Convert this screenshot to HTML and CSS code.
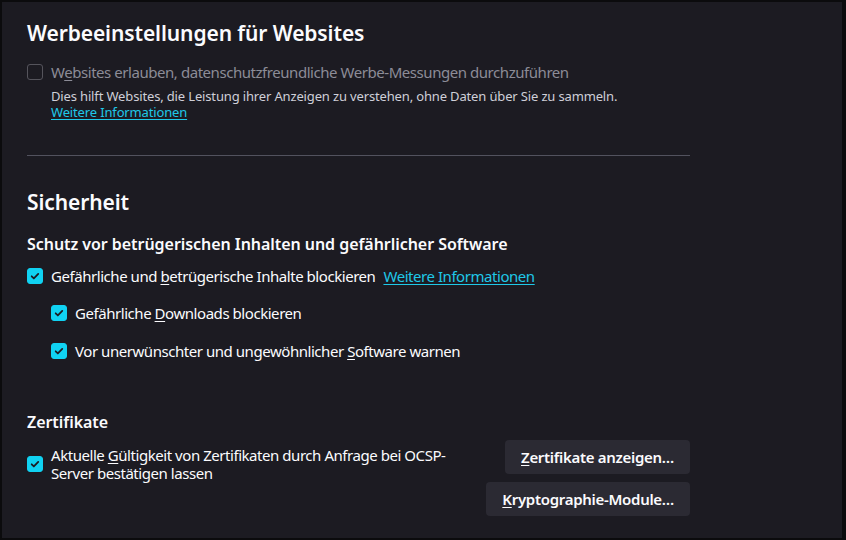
FILE: index.html
```html
<!DOCTYPE html>
<html lang="de">
<head>
<meta charset="utf-8">
<link rel="stylesheet" href="styles.css">
</head>
<body>
<div class="page">
  <main class="content">
    <h1 class="h1 first">Werbeeinstellungen für Websites</h1>
    <div class="row disabled">
      <span class="cb"></span>
      <span class="label">W<u>e</u>bsites erlauben, datenschutzfreundliche Werbe-Messungen durchzuführen</span>
    </div>
    <div class="desc">Dies hilft Websites, die Leistung ihrer Anzeigen zu verstehen, ohne Daten über Sie zu sammeln.</div>
    <div class="desc more"><a class="link" href="#">Weitere Informationen</a></div>

    <hr class="sep">

    <h1 class="h1 sec">Sicherheit</h1>
    <h2 class="h2 schutz">Schutz vor betrügerischen Inhalten und gefährlicher Software</h2>
    <div class="row r1">
      <span class="cb on"><svg viewBox="0 0 16 16"><path d="M4.2 8.3l2.5 2.5 5-5.2" /></svg></span>
      <span class="label">Gefährliche und <u>b</u>etrügerische Inhalte blockieren</span>
      <a class="link" href="#">Weitere Informationen</a>
    </div>
    <div class="row nested r2">
      <span class="cb on"><svg viewBox="0 0 16 16"><path d="M4.2 8.3l2.5 2.5 5-5.2" /></svg></span>
      <span class="label">Gefährliche <u>D</u>ownloads blockieren</span>
    </div>
    <div class="row nested r3">
      <span class="cb on"><svg viewBox="0 0 16 16"><path d="M4.2 8.3l2.5 2.5 5-5.2" /></svg></span>
      <span class="label">Vor unerwünschter und ungewöhnlicher <u>S</u>oftware warnen</span>
    </div>

    <h2 class="h2 zert">Zertifikate</h2>
    <div class="cert">
      <div class="row multi">
        <span class="cb on"><svg viewBox="0 0 16 16"><path d="M4.2 8.3l2.5 2.5 5-5.2" /></svg></span>
        <span class="label">Aktuelle <u>G</u>ültigkeit von Zertifikaten durch Anfrage bei OCSP-Server bestätigen lassen</span>
      </div>
      <div class="buttons">
        <button class="btn"><u>Z</u>ertifikate anzeigen…</button>
        <button class="btn"><u>K</u>ryptographie-Module…</button>
      </div>
    </div>
  </main>
</div>
</body>
</html>
```
FILE: styles.css
```css
* { box-sizing: border-box; }
html, body { margin: 0; padding: 0; background: #0b0b0d; }
.page {
  width: 846px;
  height: 540px;
  border-style: solid;
  border-color: #0b0b0d;
  border-width: 2px 4px 2px 2px;
  background: #1c1b22;
  color: #fbfbfe;
  font-family: "Noto Sans", "Open Sans", sans-serif;
  font-size: 15px;
  letter-spacing: -0.45px;
  overflow: hidden;
}
.content {
  width: 688px;
  padding-left: 25px;
}
.h1 {
  margin: 0;
  font-size: 21px;
  font-weight: 600;
  line-height: 28px;
  letter-spacing: -0.1px;
}
.h1.first { margin-top: 17px; }
.h2 {
  margin: 0;
  font-size: 16px;
  font-weight: 600;
  line-height: 22px;
  letter-spacing: -0.05px;
}
.row {
  display: flex;
  align-items: center;
  gap: 8px;
  line-height: 22px;
}
.row.disabled { margin-top: 14px; color: #8c8c97; }
.cb {
  flex: none;
  width: 16px;
  height: 16px;
  border-radius: 3px;
  border: 1px solid #8f8f9d;
  display: flex;
}
.disabled .cb { border-color: #55545c; }
.cb.on {
  background: #10d2f2;
  border-color: #10d2f2;
}
.cb svg {
  width: 14px;
  height: 14px;
  fill: none;
  stroke: #1c1b22;
  stroke-width: 2;
  stroke-linecap: round;
  stroke-linejoin: round;
}
u { text-underline-offset: 2px; }
.desc {
  margin: 5px 0 0 24px;
  font-size: 13px;
  line-height: 16px;
  letter-spacing: -0.15px;
  color: #cfcfd8;
}
.desc.more { margin-top: 0; }
.link {
  color: #1fc8e8;
  text-underline-offset: 2px;
}
.sep {
  margin: 35px 0 0 0;
  border: 0;
  border-top: 1px solid #52525e;
  height: 0;
}
.h1.sec { margin-top: 32px; }
.h2.schutz { margin-top: 17px; }
.row.r1 { margin-top: 10px; }
.row.nested { padding-left: 24px; }
.row.r2 { margin-top: 15px; }
.row.r3 { margin-top: 16px; }
.h2.zert { margin-top: 49px; }
.cert {
  margin-top: 7px;
  display: flex;
  justify-content: space-between;
  align-items: flex-start;
}
.row.multi {
  width: 432px;
  margin-top: 6px;
  line-height: 18px;
}
.buttons {
  display: flex;
  flex-direction: column;
  align-items: flex-end;
  gap: 8px;
}
.btn {
  height: 34px;
  padding: 0 16px;
  border: 0;
  border-radius: 4px;
  background: #2b2a33;
  color: #fbfbfe;
  font-family: inherit;
  font-size: 15px;
  font-weight: 600;
  letter-spacing: -0.3px;
}
```
